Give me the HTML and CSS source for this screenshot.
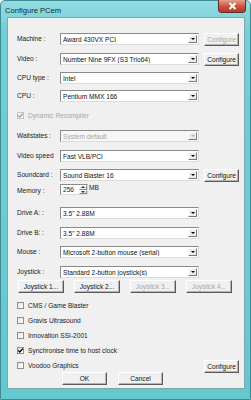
FILE: index.html
```html
<!DOCTYPE html>
<html lang="en">
<head>
    <meta charset="UTF-8">
    <title>Configure PCem</title>
    <link rel="stylesheet" href="styles.css">
</head>
<body>

    <div class="window">
        <div class="titlebar">
            <span class="title">Configure PCem</span>
            <span class="close">
                <svg width="9" height="8" viewBox="0 0 9 8"><path d="M1.5 1 L7.5 7 M7.5 1 L1.5 7" stroke="#fff" stroke-width="2"/></svg>
            </span>
        </div>

        <div class="client">
            <div class="row">
                <span class="lbl">Machine :</span>
                <div class="combo"><span class="val">Award 430VX PCI</span><span class="drop"></span></div>
                <button class="btn" disabled>Configure</button>
            </div>
            <div class="row gap8">
                <span class="lbl">Video :</span>
                <div class="combo"><span class="val">Number Nine 9FX (S3 Trio64)</span><span class="drop"></span></div>
                <button class="btn">Configure</button>
            </div>
            <div class="row gap7">
                <span class="lbl">CPU type :</span>
                <div class="combo"><span class="val">Intel</span><span class="drop"></span></div>
            </div>
            <div class="row gap6">
                <span class="lbl">CPU :</span>
                <div class="combo"><span class="val">Pentium MMX 166</span><span class="drop"></span></div>
            </div>

            <div class="check disabled dyn">
                <span class="box"><svg width="7" height="7" viewBox="0 0 7 7"><path d="M1.2 3.4 L2.8 5 L5.8 1.6" stroke="#a0a0a0" stroke-width="1.3" fill="none"/></svg></span>
                <span>Dynamic Recompiler</span>
            </div>

            <div class="row gap10">
                <span class="lbl">Waitstates :</span>
                <div class="combo disabled"><span class="val">System default</span><span class="drop"></span></div>
            </div>
            <div class="row gap8">
                <span class="lbl">Video speed</span>
                <div class="combo"><span class="val">Fast VLB/PCI</span><span class="drop"></span></div>
            </div>
            <div class="row gap7">
                <span class="lbl">Soundcard :</span>
                <div class="combo"><span class="val">Sound Blaster 16</span><span class="drop"></span></div>
                <button class="btn">Configure</button>
            </div>

            <div class="row memory">
                <span class="lbl mem-lbl">Memory :</span>
                <div class="spin">
                    <span class="val">256</span>
                    <span class="arrows"><span class="up"></span><span class="down"></span></span>
                </div>
                <span class="unit">MB</span>
            </div>

            <div class="row gap12">
                <span class="lbl">Drive A: :</span>
                <div class="combo"><span class="val">3.5" 2.88M</span><span class="drop"></span></div>
            </div>
            <div class="row gap8">
                <span class="lbl">Drive B: :</span>
                <div class="combo"><span class="val">3.5" 2.88M</span><span class="drop"></span></div>
            </div>
            <div class="row gap7">
                <span class="lbl">Mouse :</span>
                <div class="combo"><span class="val">Microsoft 2-button mouse (serial)</span><span class="drop"></span></div>
            </div>
            <div class="row gap8">
                <span class="lbl">Joystick :</span>
                <div class="combo"><span class="val">Standard 2-button joystick(s)</span><span class="drop"></span></div>
            </div>

            <div class="joy-buttons">
                <button class="btn">Joystick 1...</button>
                <button class="btn">Joystick 2...</button>
                <button class="btn" disabled>Joystick 3...</button>
                <button class="btn" disabled>Joystick 4...</button>
            </div>

            <div class="check first">
                <span class="box"></span><span>CMS / Game Blaster</span>
            </div>
            <div class="check">
                <span class="box"></span><span>Gravis Ultrasound</span>
            </div>
            <div class="check">
                <span class="box"></span><span>Innovation SSI-2001</span>
            </div>
            <div class="check">
                <span class="box"><svg width="7" height="7" viewBox="0 0 7 7"><path d="M1.2 3.4 L2.8 5 L5.8 1.6" stroke="#000" stroke-width="1.3" fill="none"/></svg></span>
                <span>Synchronise time to host clock</span>
            </div>
            <div class="voodoo-row">
                <div class="check voodoo">
                    <span class="box"></span><span>Voodoo Graphics</span>
                </div>
                <button class="btn">Configure</button>
            </div>

            <div class="dialog-buttons">
                <button class="btn wide">OK</button>
                <button class="btn wide">Cancel</button>
            </div>
        </div>
    </div>

</body>
</html>
```

FILE: styles.css
```css
body {
    margin: 0;
    width: 251px;
    height: 400px;
    overflow: hidden;
    font-family: "Liberation Sans", Arial, sans-serif;
    font-size: 6.6px;
    color: #1a1a1a;
    background-color: #ffffff;
}
.window {
    width: 251px;
    height: 400px;
    box-sizing: border-box;
    border: 1px solid #3d8c93;
    border-radius: 5px 5px 0 0;
    background: linear-gradient(to bottom, #93dde2 0px, #72cfd5 30px, #64c8ce 100%);
    padding: 0 5px 10px 6px;
    display: flex;
    flex-direction: column;
}
.titlebar {
    height: 16px;
    display: flex;
    align-items: flex-start;
}
.title {
    font-size: 7.6px;
    color: #10282a;
    margin-top: 5px;
    margin-left: -2px;
}
.close {
    margin-left: auto;
    margin-right: -1px;
    margin-top: -1px;
    width: 28px;
    height: 13px;
    box-sizing: border-box;
    border: 1px solid #6b2a2a;
    border-top: none;
    border-radius: 0 0 4px 4px;
    background: linear-gradient(to bottom, #e6a08e, #c9523e 55%, #b23a2a);
    display: flex;
    justify-content: center;
    align-items: center;
}
.client {
    flex: 1;
    background-color: #f0f0f0;
    border: 1px solid #7fa7ab;
    padding: 15px 5px 0 9px;
    display: flex;
    flex-direction: column;
}
/* rows with a label, combo box and optional button */
.row {
    display: flex;
    align-items: flex-start;
    height: 12px;
}
.gap6 { margin-top: 6px; }
.gap7 { margin-top: 7px; }
.gap8 { margin-top: 8px; }
.gap10 { margin-top: 10px; }
.gap12 { margin-top: 12px; }
.lbl {
    width: 43px;
    flex-shrink: 0;
    line-height: 11px;
}
.combo {
    width: 139px;
    height: 12px;
    box-sizing: border-box;
    border: 1px solid;
    border-color: #8a8a8a #dcdcdc #dcdcdc #8a8a8a;
    background-color: #ffffff;
    display: flex;
    align-items: center;
    padding: 0 1px 0 2px;
}
.combo .val {
    flex: 1;
    white-space: nowrap;
    overflow: hidden;
    color: #111;
}
.combo.disabled {
    background-color: #f6f6f6;
}
.combo.disabled .val {
    color: #a6a6a6;
}
.drop {
    width: 9px;
    height: 8px;
    box-sizing: border-box;
    border: 1px solid;
    border-color: #ffffff #7a7a7a #7a7a7a #ffffff;
    background-color: #ececec;
    position: relative;
}
.drop::after {
    content: "";
    position: absolute;
    left: 2px;
    top: 2px;
    border-left: 2px solid transparent;
    border-right: 2px solid transparent;
    border-top: 2px solid #000;
}
.combo.disabled .drop::after {
    border-top-color: #b0b0b0;
}
.btn {
    font-family: inherit;
    font-size: 6.6px;
    color: #111;
    width: 35px;
    height: 13px;
    margin-left: 5px;
    padding: 0;
    box-sizing: border-box;
    background-color: #f0f0f0;
    border: 1px solid;
    border-color: #ffffff #5a5a5a #5a5a5a #ffffff;
    box-shadow: inset -1px -1px #b4b4b4;
    flex-shrink: 0;
}
.btn:disabled {
    color: #a8a8a8;
}
/* memory spin box */
.memory {
    margin-top: 3px;
    height: 11px;
}
.mem-lbl {
    line-height: 14px;
}
.spin {
    width: 28px;
    height: 11px;
    box-sizing: border-box;
    border: 1px solid;
    border-color: #8a8a8a #dcdcdc #dcdcdc #8a8a8a;
    background-color: #ffffff;
    display: flex;
    align-items: center;
    padding-left: 2px;
}
.spin .val {
    flex: 1;
}
.arrows {
    width: 8px;
    height: 9px;
    display: flex;
    flex-direction: column;
}
.arrows span {
    flex: 1;
    border: 1px solid;
    border-color: #ffffff #8a8a8a #8a8a8a #ffffff;
    background-color: #eeeeee;
    position: relative;
}
.arrows .up::after,
.arrows .down::after {
    content: "";
    position: absolute;
    left: 1px;
    top: 1px;
    border-left: 2px solid transparent;
    border-right: 2px solid transparent;
}
.arrows .up::after {
    border-bottom: 2px solid #333;
    top: 0;
}
.arrows .down::after {
    border-top: 2px solid #333;
    top: 0;
}
.unit {
    margin-left: 1px;
    line-height: 7px;
}
/* joystick configure buttons */
.joy-buttons {
    display: flex;
    gap: 10px;
    margin-top: 2px;
    padding-left: 1px;
}
.joy-buttons .btn {
    width: 46px;
    margin-left: 0;
}
/* checkboxes */
.check {
    display: flex;
    align-items: center;
    height: 9px;
    margin-top: 6px;
}
.check .box {
    width: 7px;
    height: 7px;
    box-sizing: border-box;
    border: 1px solid #8f8f8f;
    background: linear-gradient(135deg, #e4e4e4, #ffffff);
    margin-right: 4px;
    display: flex;
    align-items: center;
    justify-content: center;
}
.check .box svg {
    margin: -1px;
}
.check.disabled {
    color: #a6a6a6;
}
.check.disabled .box {
    border-color: #c4c4c4;
    background: #f4f4f4;
}
.check.dyn {
    margin-top: 9px;
}
.check.first {
    margin-top: 8px;
}
.voodoo-row {
    display: flex;
    justify-content: space-between;
    align-items: flex-start;
    height: 13px;
    margin-top: 5px;
}
.check.voodoo {
    margin-top: 1px;
}
.dialog-buttons {
    display: flex;
    gap: 11px;
    margin-top: -1px;
    padding-left: 45px;
}
.dialog-buttons .btn {
    width: 45px;
    margin-left: 0;
}
```
